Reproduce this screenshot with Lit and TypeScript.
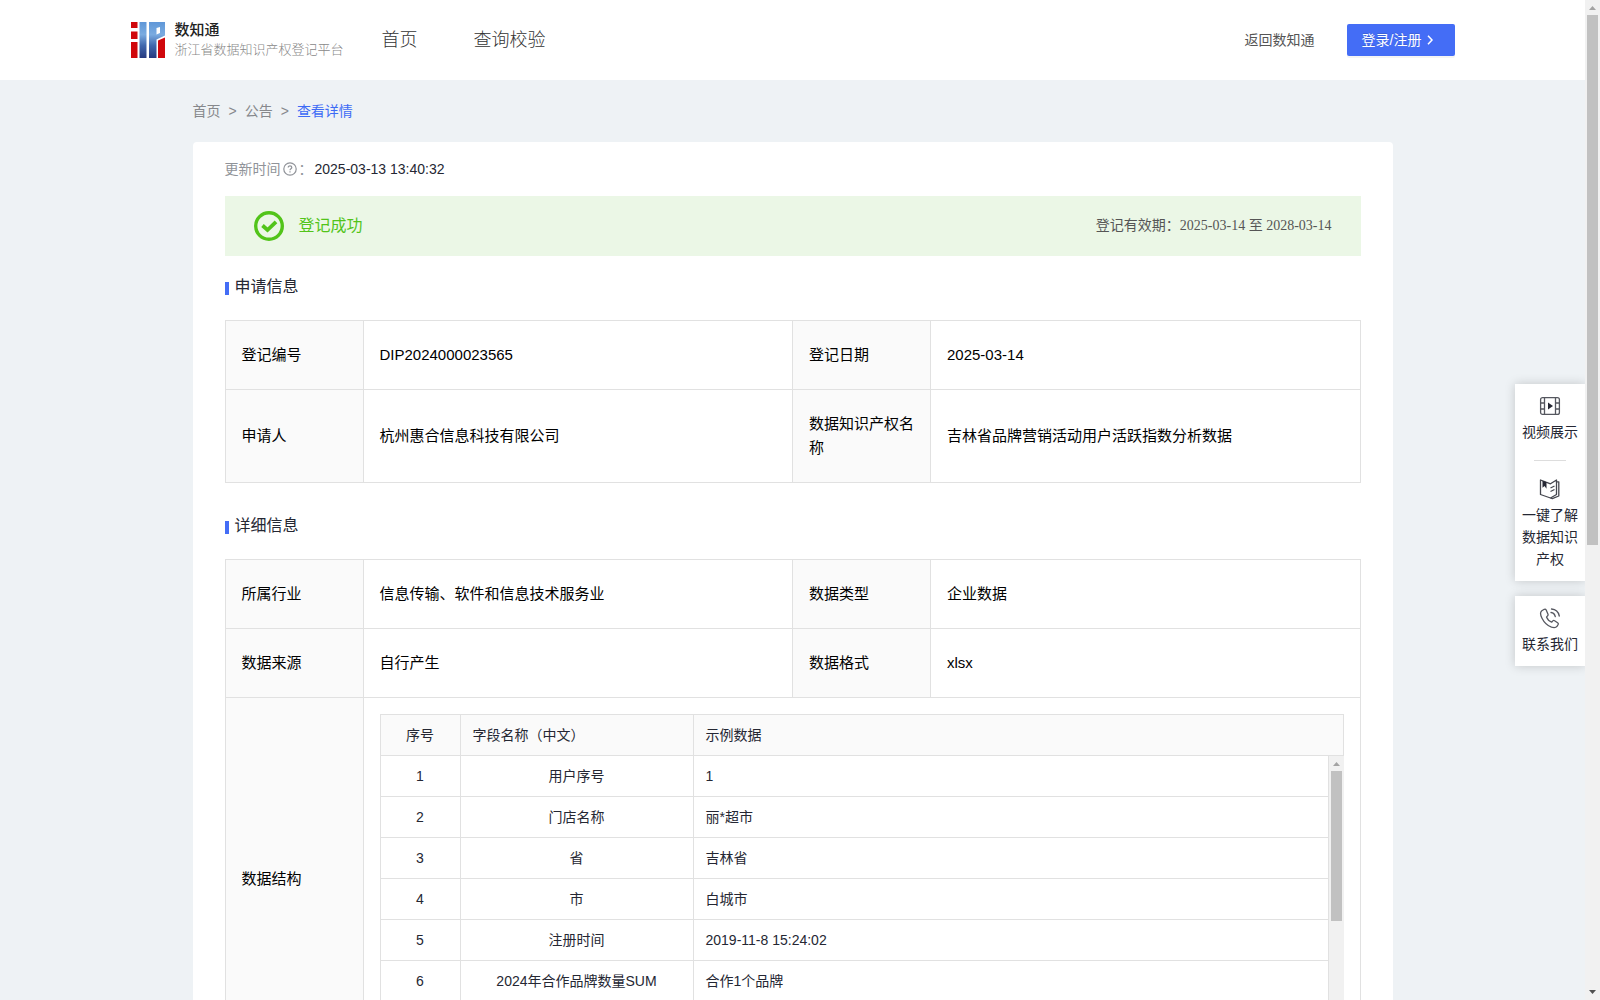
import { LitElement, html, css, svg } from "lit";
import { customElement, property } from "lit/decorators.js";

const logo = svg`
<svg class="logo" width="34" height="36" viewBox="0 0 34 36" aria-hidden="true">
  <defs>
    <linearGradient id="blue" gradientUnits="userSpaceOnUse" x1="0" y1="0" x2="0" y2="36">
      <stop offset="0" stop-color="#5f97d8"/>
      <stop offset=".35" stop-color="#7aabe0"/>
      <stop offset=".65" stop-color="#4068ae"/>
      <stop offset="1" stop-color="#26397f"/>
    </linearGradient>
  </defs>
  <path fill="#d0070c" d="M0 0h6.500v6H0zM0 9.500h6.500v7.500H0zM0 20h6.500v16H0zM27 18.500l7-3V36h-7z"/>
  <path fill="url(#blue)" d="M8.500 0h7v36h-7z"/>
  <path fill="url(#blue)" fill-rule="evenodd" d="M18 0h16v13.500l-8.500 4V36H18zM25.500 6v6.500L29 11V5z"/>
</svg>`;

const chevron = svg`
<svg width="14" height="14" viewBox="0 0 14 14" fill="none" stroke="currentColor" stroke-width="1.500" aria-hidden="true">
  <path d="M5 2.800 9 7l-4 4.200"/>
</svg>`;

const question = svg`
<svg width="14" height="14" viewBox="0 0 14 14" fill="none" stroke="currentColor" stroke-width="1.200" aria-hidden="true">
  <circle cx="7" cy="7" r="6.200"/>
  <path d="M5.200 5.600C5.200 3.300 8.800 3.400 8.800 5.500 8.800 6.800 7 6.800 7 8.300"/>
  <path d="M7 9.300v1.300"/>
</svg>`;

const success = svg`
<svg width="30" height="30" viewBox="0 0 30 30" fill="none" stroke="#52c41a" aria-hidden="true">
  <circle cx="15" cy="15" r="13.300" stroke-width="3.400"/>
  <path d="M8.500 14.500 13.500 19 22 10.800" stroke-width="3.800"/>
</svg>`;

const video = svg`
<svg width="22" height="22" viewBox="0 0 22 22" fill="none" stroke="#55575f" stroke-width="1.300" aria-hidden="true">
  <rect x="1.600" y="2.600" width="18.800" height="16.800" rx="2"/>
  <path d="M5.500 2.600v16.800M16.500 2.600v16.800M1.600 8h3.900M1.600 14h3.900M16.500 8h3.900M16.500 14h3.900"/>
  <path d="M9 7.500v7l5-3.500z" fill="#252733" stroke="none"/>
</svg>`;

const book = svg`
<svg width="22" height="22" viewBox="0 0 22 22" fill="none" stroke="#45474f" stroke-width="1.300" stroke-linejoin="round" aria-hidden="true">
  <path d="M1.500 2 7 4.200l4.500 1.600L17.500 2v14.500l-6 3.500L1.500 16.500z"/>
  <path d="M17.500 3.800h2.300V18l-6.500 2.600-1.800-.6"/>
  <path d="M11.500 10 15.500 8M11.500 13.500l4-2"/>
  <path d="M3.500 2.800v7l2-1.800 2 2.700V4.300z" fill="#252733" stroke="none"/>
</svg>`;

const phone = svg`
<svg width="22" height="22" viewBox="0 0 22 22" fill="none" stroke="#55575f" stroke-width="1.300" stroke-linecap="round" stroke-linejoin="round" aria-hidden="true">
  <path d="M5.300 2.300 2.800 3.800C1.300 5 1.300 8 3 11.300c2 4 5.500 7.500 9.500 8.900 2.500.8 4.700.3 5.700-1l1-1.900c.3-.7 0-1.200-.6-1.600l-3-2c-.7-.4-1.300-.3-1.800.2l-1.200 1.300c-2.200-.8-4.200-2.800-5.100-5.100l1.200-1.400c.5-.5.5-1 .2-1.700L7.200 3C6.700 2.100 6.100 1.900 5.300 2.300z"/>
  <path d="M12 5.500c2 .2 3.800 2 4.300 4.100M12.500 2c4 .3 7 3.200 7.800 7"/>
</svg>`;

@customElement("scroll-rail")
export class ScrollRail extends LitElement {
  @property({ type: Number }) share = 50;

  static styles = css`
    :host { display: flex; flex-direction: column; width: 15px; background: #f1f1f1; }
    .arrow { display: block; flex: none; width: 15px; height: 15px; }
    .track { flex: 1; padding: 0 2px; }
    .thumb { background: #c1c1c1; }
  `;

  render() {
    return html`
      <svg class="arrow" viewBox="0 0 15 15"><path fill="#a3a3a3" d="M4 10h7L7.500 6z"/></svg>
      <div class="track"><div class="thumb" style="height:${this.share}%"></div></div>
      <svg class="arrow" viewBox="0 0 15 15"><path fill="#505050" d="M4 5h7L7.500 9z"/></svg>
    `;
  }
}

const fields: [string, string][] = [
  ["用户序号", "1"],
  ["门店名称", "丽*超市"],
  ["省", "吉林省"],
  ["市", "白城市"],
  ["注册时间", "2019-11-8 15:24:02"],
  ["2024年合作品牌数量SUM", "合作1个品牌"],
];

@customElement("app-root")
export class AppRoot extends LitElement {
  static styles = css`
    :host {
      display: block;
      font-family: "Liberation Sans", "Noto Sans CJK SC", sans-serif;
      font-size: 14px;
      line-height: 22px;
      font-weight: 400;
      color: #252733;
    }
    * { box-sizing: border-box; }
    a { color: inherit; text-decoration: none; }
    .window { display: grid; grid-template-columns: minmax(0, 1fr) 15px; height: 100vh; position: relative; overflow: hidden; }
    .page { background: #eef2f5; min-width: 0; overflow: hidden; }
    .rail { height: 100%; }

    .header { background: #fff; }
    .header-inner { max-width: 1324px; height: 80px; margin: 0 auto; display: flex; align-items: center; }
    .brand { display: flex; align-items: center; gap: 10px; }
    .brand-name { display: block; font-size: 15px; line-height: 20px; font-weight: 500; color: #222; }
    .brand-sub { display: block; font-size: 13px; line-height: 20px; font-weight: 300; color: #888; }
    .nav { display: flex; gap: 56px; margin-left: 38px; font-size: 18px; font-weight: 300; color: #333; flex: 1; }
    .back { color: #555; }
    .login {
      margin-left: 32px; width: 108px; height: 32px; padding: 0 15px; border: 0; border-radius: 2px;
      background: #446df6; color: #fff; font: inherit; display: flex; align-items: center; gap: 2px;
      white-space: nowrap; text-shadow: 0 -1px 0 rgba(0, 0, 0, 0.12); box-shadow: 0 2px 0 rgba(0, 0, 0, 0.045);
    }

    .content { max-width: 1200px; margin: 0 auto; padding-top: 20px; }
    .crumbs { display: flex; gap: 8px; color: #86888c; }
    .crumbs .here { color: #3d6bf5; }
    .card { margin-top: 20px; background: #fff; border-radius: 4px; padding: 16px 32px; }
    .updated { display: flex; align-items: center; color: #909399; gap: 2px; }
    .updated .when { color: #252733; }

    .banner {
      display: flex; align-items: center; justify-content: space-between;
      height: 60px; margin-top: 16px; padding: 0 29px; background: #ebf7e6;
    }
    .state { display: flex; align-items: center; gap: 15px; font-size: 16px; color: #52c41a; }
    .valid { color: #555; font-family: "Liberation Serif", "Noto Sans CJK SC", serif; }

    .title { display: flex; align-items: center; gap: 6px; margin: 0; padding: 20px 0 22px; font-size: 16px; line-height: 22px; font-weight: 400; }
    .title::before { content: ""; width: 4px; height: 13px; background: #446df6; margin-top: 2px; }
    .title.second { padding-top: 32px; }

    table { border-collapse: collapse; table-layout: fixed; width: 100%; }
    .info > tbody > tr > th, .info > tbody > tr > td {
      border: 1px solid #e1e1e1; padding: 22px 16px; text-align: left; font-size: 15px; line-height: 24px;
      font-weight: 400; color: #000;
    }
    .info > tbody > tr > th { background: #fafafa; }
    .label-col { width: 138px; }
    .info > tbody > tr > td.nest { padding: 16px; }

    .grid th, .grid td {
      border: 1px solid #e1e1e1; padding: 9px 12px; text-align: left; font-size: 14px; line-height: 22px;
      font-weight: 400; color: #252733;
    }
    .grid .mid { text-align: center; }
    .grid .head th { background: #fafafa; }
    .no-col { width: 80px; }
    .name-col { width: 233px; }
    .body { display: grid; grid-template-columns: minmax(0, 1fr) 15px; height: 288px; }
    .body .grid { align-self: start; }
    .body .grid tr:first-child td { border-top: 0; }

    .side { position: absolute; right: 15px; top: 384px; width: 70px; display: grid; gap: 15px; }
    .panel { background: #fff; box-shadow: 0 0 10px rgba(0, 0, 0, 0.18); padding: 0 6px; clip-path: inset(-12px 0 -12px -12px); }
    .tool { display: flex; flex-direction: column; align-items: center; gap: 4px; padding: 11px 0; text-align: center; }
    .tool svg { display: block; }
    .rule { width: 32px; height: 1px; margin: 6px auto; border: 0; background: #ddd; }
  `;

  render() {
    return html`
      <div class="window">
        <div class="page">
          <header class="header">
            <div class="header-inner">
              <a class="brand" href="#">${logo}
                <span><span class="brand-name">数知通</span><span class="brand-sub">浙江省数据知识产权登记平台</span></span>
              </a>
              <nav class="nav"><a href="#">首页</a><a href="#">查询校验</a></nav>
              <a class="back" href="#">返回数知通</a>
              <button class="login" type="button">登录/注册 ${chevron}</button>
            </div>
          </header>
          <main class="content">
            <nav class="crumbs">
              <a href="#">首页</a><span>&gt;</span><a href="#">公告</a><span>&gt;</span><a class="here" href="#">查看详情</a>
            </nav>
            <section class="card">
              <div class="updated"><span>更新时间</span>${question}<span>：</span><span class="when">2025-03-13 13:40:32</span></div>
              <div class="banner">
                <div class="state">${success}<span>登记成功</span></div>
                <div class="valid">登记有效期：2025-03-14 至 2028-03-14</div>
              </div>
              <h2 class="title">申请信息</h2>
              <table class="info">
                <colgroup><col class="label-col"><col><col class="label-col"><col></colgroup>
                <tbody>
                  <tr><th>登记编号</th><td>DIP2024000023565</td><th>登记日期</th><td>2025-03-14</td></tr>
                  <tr><th>申请人</th><td>杭州惠合信息科技有限公司</td><th>数据知识产权名称</th><td>吉林省品牌营销活动用户活跃指数分析数据</td></tr>
                </tbody>
              </table>
              <h2 class="title second">详细信息</h2>
              <table class="info">
                <colgroup><col class="label-col"><col><col class="label-col"><col></colgroup>
                <tbody>
                  <tr><th>所属行业</th><td>信息传输、软件和信息技术服务业</td><th>数据类型</th><td>企业数据</td></tr>
                  <tr><th>数据来源</th><td>自行产生</td><th>数据格式</th><td>xlsx</td></tr>
                  <tr>
                    <th>数据结构</th>
                    <td class="nest" colspan="3">
                      <table class="grid">
                        <colgroup><col class="no-col"><col class="name-col"><col></colgroup>
                        <thead class="head"><tr><th class="mid">序号</th><th>字段名称（中文）</th><th>示例数据</th></tr></thead>
                      </table>
                      <div class="body">
                        <table class="grid">
                          <colgroup><col class="no-col"><col class="name-col"><col></colgroup>
                          <tbody>
                            ${fields.map(([name, sample], i) => html`
                              <tr><td class="mid">${i + 1}</td><td class="mid">${name}</td><td>${sample}</td></tr>`)}
                          </tbody>
                        </table>
                        <scroll-rail .share=${58}></scroll-rail>
                      </div>
                    </td>
                  </tr>
                </tbody>
              </table>
            </section>
          </main>
        </div>
        <scroll-rail class="rail" .share=${54.6}></scroll-rail>
        <aside class="side">
          <div class="panel">
            <a class="tool" href="#">${video}<span>视频展示</span></a>
            <hr class="rule">
            <a class="tool" href="#">${book}<span>一键了解数据知识产权</span></a>
          </div>
          <div class="panel">
            <a class="tool" href="#">${phone}<span>联系我们</span></a>
          </div>
        </aside>
      </div>
    `;
  }
}
